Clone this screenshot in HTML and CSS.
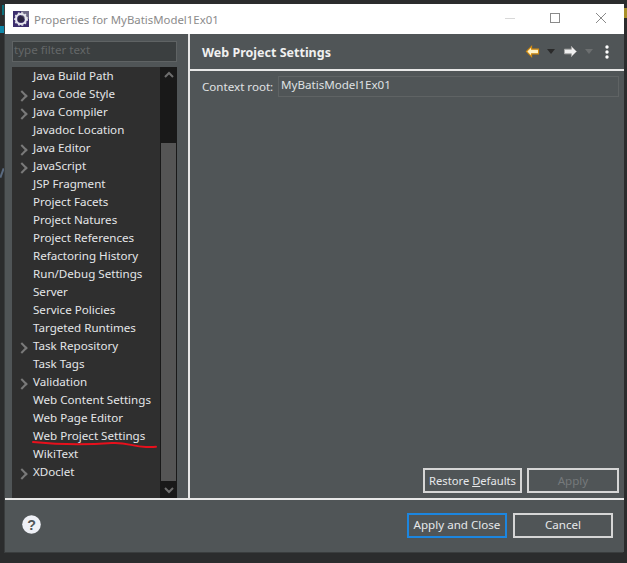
FILE: index.html
```html
<!DOCTYPE html>
<html lang="en">
<head>
<meta charset="utf-8">
<title>Properties for MyBatisModel1Ex01</title>
<link rel="stylesheet" href="styles.css">
</head>
<body>
<span class="peek peek-bang"></span>
<span class="peek peek-teal"></span>
<span class="peek peek-slash"></span>
<span class="peek peek-yellow"></span>
<div class="window">
  <header class="titlebar">
    <svg class="app-icon" viewBox="0 0 16 16" width="16" height="16"><rect width="16" height="16" fill="#3d2f6e"/><rect x="8" width="8" height="8" fill="#6f6a86"/><circle cx="8" cy="8" r="5" fill="none" stroke="#e8e8ee" stroke-width="2.2"/><circle cx="8" cy="8" r="6.2" fill="none" stroke="#e8e8ee" stroke-width="1.4" stroke-dasharray="1.8 1.8"/><circle cx="8" cy="8" r="3" fill="#2b2540"/></svg>
    <span class="title">Properties for MyBatisModel1Ex01</span>
    <div class="winctl">
      <svg viewBox="0 0 46 20" width="46" height="20"><path d="M19 9.500h10" stroke="#d8d8d8"/></svg>
      <svg viewBox="0 0 46 20" width="46" height="20"><rect x="18.500" y="4.500" width="9" height="9" fill="none" stroke="#8a8a8a"/></svg>
      <svg viewBox="0 0 46 20" width="46" height="20"><path d="M18 4l10 10M28 4l-10 10" stroke="#8a8a8a" fill="none"/></svg>
    </div>
  </header>
  <main class="content">
    <aside class="sidebar">
      <div class="filter">type filter text</div>
      <div class="tree">
        <ul class="items">
          <li class="item">Java Build Path</li>
          <li class="item parent">Java Code Style</li>
          <li class="item parent">Java Compiler</li>
          <li class="item">Javadoc Location</li>
          <li class="item parent">Java Editor</li>
          <li class="item parent">JavaScript</li>
          <li class="item">JSP Fragment</li>
          <li class="item">Project Facets</li>
          <li class="item">Project Natures</li>
          <li class="item">Project References</li>
          <li class="item">Refactoring History</li>
          <li class="item">Run/Debug Settings</li>
          <li class="item">Server</li>
          <li class="item">Service Policies</li>
          <li class="item">Targeted Runtimes</li>
          <li class="item parent">Task Repository</li>
          <li class="item">Task Tags</li>
          <li class="item parent">Validation</li>
          <li class="item">Web Content Settings</li>
          <li class="item">Web Page Editor</li>
          <li class="item">Web Project Settings</li>
          <li class="item">WikiText</li>
          <li class="item parent">XDoclet</li>
        </ul>
        <div class="scrollbar">
          <svg class="arrow" viewBox="0 0 16 17" width="16" height="17"><path d="M4 10l4-4 4 4" fill="none" stroke="#6e6e6e" stroke-width="2"/></svg>
          <div class="track"><div class="thumb"></div></div>
          <svg class="arrow" viewBox="0 0 16 17" width="16" height="17"><path d="M4 7l4 4 4-4" fill="none" stroke="#6e6e6e" stroke-width="2"/></svg>
        </div>
      </div>
    </aside>
    <section class="page">
      <div class="page-head">
        <h1>Web Project Settings</h1>
        <div class="nav">
          <svg viewBox="0 0 16 14" width="15" height="13"><path d="M1.500 7L7 1.500V4.500h7.500v5H7v3z" fill="#fff3c8" stroke="#d08a10" stroke-width="1.200"/></svg>
          <svg class="caret" viewBox="0 0 8 5" width="8" height="5"><path d="M0 0h8L4 5z" fill="#2a2a2a"/></svg>
          <svg class="next" viewBox="0 0 16 14" width="15" height="13"><path d="M14.500 7L9 1.500V4.500H1.500v5H9v3z" fill="#f0f0f0" stroke="#a8a8a8" stroke-width="1"/></svg>
          <svg class="caret" viewBox="0 0 8 5" width="8" height="5"><path d="M0 0h8L4 5z" fill="#6c6f70"/></svg>
          <svg class="menu" viewBox="0 0 4 14" width="4" height="14"><circle cx="2" cy="2" r="1.700" fill="#fff"/><circle cx="2" cy="7" r="1.700" fill="#fff"/><circle cx="2" cy="12" r="1.700" fill="#fff"/></svg>
        </div>
      </div>
      <div class="page-body">
        <div class="field">
          <label class="field-label">Context root:</label>
          <div class="field-value">MyBatisModel1Ex01</div>
        </div>
        <div class="page-actions">
          <button class="btn restore">Restore <u>D</u>efaults</button>
          <button class="btn apply" disabled>Apply</button>
        </div>
      </div>
    </section>
  </main>
  <footer class="footer">
    <svg class="help" viewBox="0 0 20 20" width="19" height="19"><circle cx="10" cy="10" r="9.800" fill="#eef0f6"/><text x="10" y="15.500" text-anchor="middle" class="help-mark">?</text></svg>
    <div class="footer-actions">
      <button class="btn primary">Apply and Close</button>
      <button class="btn cancel">Cancel</button>
    </div>
  </footer>
  <svg class="scribble" viewBox="0 0 130 12" width="130" height="12"><path d="M1 2C30 5 60 4.500 80 3c15-.8 20 3.500 34 4 5 .2 8 0 10-.2" fill="none" stroke="#e8101c" stroke-width="2" stroke-linecap="round"/></svg>
</div>
</body>
</html>
```
FILE: styles.css
```css
* { box-sizing: border-box; }
html, body { margin: 0; height: 100%; }
body {
  background: #2b2c2d;
  font-family: "Noto Sans", "Open Sans", sans-serif;
  font-size: 11.6px;
  color: #e6e6e6;
  overflow: hidden;
}
.peek { position: absolute; display: block; }
.peek-bang { left: 2px; top: 5px; width: 2px; height: 10px; background: #0f6f7a; }
.peek-teal { left: 0; top: 26px; width: 5px; height: 7px; background: #0f87a8; }
.peek-slash { left: 1px; top: 168px; width: 2px; height: 10px; background: #5a6a80; transform: rotate(20deg); }
.peek-yellow { left: 624px; top: 8px; width: 3px; height: 10px; background: #a8902a; }
.window {
  position: relative;
  margin: 4px 0 0 5px;
  width: 619px;
  height: 548px;
  background: #505557;
  display: flex;
  flex-direction: column;
  box-shadow: -1px 1px 0 #3a3d3e;
}
.titlebar {
  height: 30px;
  background: #fff;
  display: flex;
  align-items: center;
  padding-left: 8px;
}
.app-icon { margin-right: 5px; }
.title { color: #8b8b8b; flex: 1; font-size: 11.4px; }
.winctl { display: flex; }
.winctl svg { display: block; }
.content {
  height: 466px;
  display: flex;
  border-bottom: 2px solid #e8e8e8;
}
.sidebar {
  width: 185px;
  padding: 7px 11px 0 7px;
  border-right: 2px solid #e8e8e8;
  flex: none;
  display: flex;
  flex-direction: column;
}
.filter {
  height: 21px;
  background: #3b3f40;
  border: 1px solid #5f6364;
  color: #646768;
  padding-left: 1px;
  line-height: 16px;
}
.tree {
  margin-top: 5px;
  flex: 1;
  display: flex;
  background: #2f2f2f;
  min-height: 0;
}
.items {
  list-style: none;
  margin: 0;
  padding: 0;
  flex: 1;
}
.item {
  height: 18px;
  line-height: 17px;
  padding-left: 21px;
  position: relative;
  white-space: nowrap;
  color: #e4e6e8;
}
.parent::before {
  content: "";
  position: absolute;
  left: 6px;
  top: 7px;
  width: 6px;
  height: 6px;
  border-top: 2px solid #7a7a7a;
  border-right: 2px solid #7a7a7a;
  transform: rotate(45deg);
}
.scrollbar {
  width: 17px;
  flex: none;
  background: #191919;
  display: flex;
  flex-direction: column;
  align-items: center;
}
.arrow { display: block; flex: none; }
.track { flex: 1; width: 15px; display: flex; flex-direction: column; justify-content: flex-end; }
.thumb { height: 338px; background: #555555; }
.page { flex: 1; display: flex; flex-direction: column; min-width: 0; }
.page-head {
  height: 37px;
  border-bottom: 2px solid #e8e8e8;
  display: flex;
  align-items: center;
  padding: 0 15px 0 12px;
}
h1 {
  margin: 0;
  padding-top: 2px;
  flex: 1;
  font-size: 12.500px;
  font-weight: 700;
  color: #f0f0f0;
}
.nav { display: flex; align-items: center; }
.caret { margin-left: 7px; }
.next { margin-left: 8px; }
.menu { margin-left: 12px; }
.nav svg { display: block; }
.page-body {
  flex: 1;
  display: flex;
  flex-direction: column;
  padding: 5px 5px 5px 12px;
}
.field { display: flex; flex: 1; align-items: flex-start; }
.field-label { line-height: 21px; width: 76px; flex: none; color: #e0e2e4; }
.field-value {
  flex: 1;
  height: 21px;
  border: 1px solid #5f6364;
  padding-left: 2px;
  line-height: 15px;
  color: #dfe1e3;
}
.page-actions { display: flex; justify-content: flex-end; gap: 5px; }
.btn {
  height: 25px;
  background: transparent;
  border: 2px solid #d6d6d6;
  color: #e6e8ea;
  font: inherit;
  padding: 0;
  line-height: 19px;
}
.restore { width: 99px; font-size: 11.200px; }
.apply { width: 92px; color: #75797b; }
.footer {
  flex: 1;
  display: flex;
  align-items: flex-start;
  padding: 13px 11px 0 17px;
}
.help { margin-top: 2px; }
.help-mark { font: 700 15px "Liberation Sans", sans-serif; fill: #505557; }
.footer-actions { margin-left: auto; display: flex; gap: 6px; }
.footer-actions .btn { padding-bottom: 2px; }
.primary { width: 100px; border-color: #1c86e0; }
.cancel { width: 100px; }
.scribble { position: absolute; left: 27px; top: 436px; }
```
